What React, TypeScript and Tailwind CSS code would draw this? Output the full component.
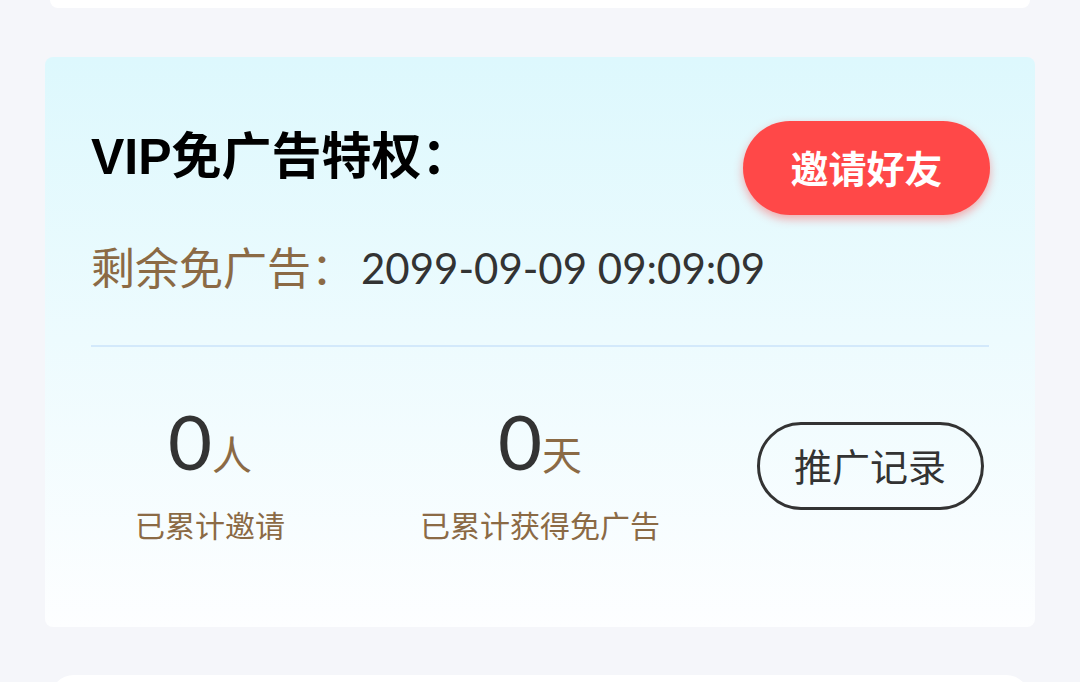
import React from "react";

const font = { fontFamily: 'Lato, "Noto Sans CJK SC", sans-serif' };
const titleFont = { fontFamily: '"Liberation Sans", "Noto Sans CJK SC", sans-serif' };

export default function App() {
  return (
    <div className="w-[1080px] h-[682px] overflow-hidden bg-[#f5f6fa] flex flex-col" style={font}>
      <div className="mx-[50px] h-[8px] bg-white rounded-b-[24px] shrink-0" />
      <div className="mx-[45px] mt-[49px] h-[570px] shrink-0 rounded-[8px] bg-gradient-to-b from-[#ddf8fd] to-[#fdfeff] flex flex-col">
        <div className="flex items-start justify-between pl-[46px] pr-[45px] pt-[64px]">
          <div className="mt-[11px] text-[50px] leading-[50px] font-bold text-black" style={titleFont}>VIP免广告特权：</div>
          <div className="w-[247px] h-[94px] rounded-full bg-[#ff4848] shadow-[0_4px_10px_rgba(255,72,72,0.45)] flex items-center justify-center text-white text-[38px] font-bold">
            邀请好友
          </div>
        </div>
        <div className="pl-[46px] mt-[31px] flex items-center h-[44px]">
          <span className="text-[44px] leading-[44px] text-[#8b6a45]">剩余免广告：</span>
          <span className="ml-[6px] text-[42px] leading-[44px] text-[#333333]">2099-09-09 09:09:09</span>
        </div>
        <div className="mx-[46px] mt-[55px] h-[2px] bg-[#d3e9fb]" />
        <div className="grid grid-cols-3 mt-[54px]">
          <div className="flex flex-col items-center">
            <div className="flex items-baseline">
              <span className="text-[76px] leading-[80px] text-[#333333]">0</span>
              <span className="text-[40px] leading-[40px] text-[#8b6a45]">人</span>
            </div>
            <div className="mt-[27px] text-[30px] leading-[34px] text-[#8b6a45]">已累计邀请</div>
          </div>
          <div className="flex flex-col items-center">
            <div className="flex items-baseline">
              <span className="text-[76px] leading-[80px] text-[#333333]">0</span>
              <span className="text-[40px] leading-[40px] text-[#8b6a45]">天</span>
            </div>
            <div className="mt-[27px] text-[30px] leading-[34px] text-[#8b6a45]">已累计获得免广告</div>
          </div>
          <div className="flex items-start justify-center pt-[21px]">
            <div className="w-[227px] h-[88px] rounded-full border-[3px] border-[#333333] flex items-center justify-center text-[38px] text-[#333333]">
              推广记录
            </div>
          </div>
        </div>
      </div>
      <div className="mx-[50px] mt-[48px] h-[40px] bg-white rounded-t-[24px] shrink-0" />
    </div>
  );
}
